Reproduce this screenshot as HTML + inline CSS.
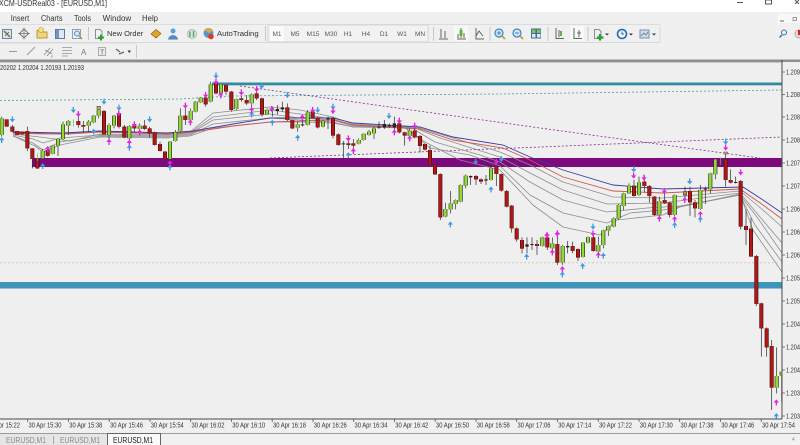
<!DOCTYPE html>
<html><head><meta charset="utf-8"><title>MT4 chart</title>
<style>
html,body{margin:0;padding:0;background:#f0f0f0;width:800px;height:445px;overflow:hidden}
svg{display:block;font-family:"Liberation Sans",sans-serif;filter:blur(.35px)}
.m{font-size:8px;fill:#333}
.tf{font-size:6.5px;fill:#555;text-anchor:middle}
.ax{font-size:7px;fill:#333}
.w{stroke:#333;stroke-width:2.2;fill:none}
</style></head><body>
<svg width="800" height="445" viewBox="0 0 800 445" xmlns="http://www.w3.org/2000/svg">
<defs>
<path id="d" d="M-2-9H2V-1H8L0 9-8-1H-2Z"/>
<path id="u" d="M-2 9H2V1H8L0-9-8 1H-2Z"/>
<path id="r4" d="M20 133V155M37 155V170M52 168V180M67 170V178M82 168V220M97 220V252M112 252V280M143 225V243M235 138V150M250 150V155M312 108V178M357 115V155M373 155V187M403 152V160M434 152V162M449 160V175M464 172V210M480 207V228M495 230V252M556 122V135M617 68V88M648 25V55M678 30V50M694 50V105M724 70V75M740 75V85M770 55V70M786 70V118"/>
<path id="g4" d="M5 130V180M128 228V250M158 212V237M174 192V212M189 148V192M205 138V152M266 140V152M281 122V142M296 105V122M327 150V180M342 122V152M388 153V190M419 152V162M510 200V252M526 172V198M541 122V168M572 108V135M587 80V110M602 68V82M632 28V80M663 28V55M709 72V102M755 58V85M801 105V118"/>
<path id="r5" d="M52 97V135M67 135V160M128 110V128M143 128V157M189 130V182M205 178V210M235 205V210M250 205V212M388 145V172M404 172V182M434 167V187M450 183V213M465 207V224M480 225V268M495 268V298"/>
<path id="g5" d="M83 148V158M113 112V150M159 138V155M266 195V206M281 176V195M297 170V180M312 160V175M419 167V183"/>
<path id="r7" d="M121 42V172M304 42V92M320 93V140M335 137V205M350 205V238M366 240V266M411 252V258M442 232V262M472 252V308M518 258V273M534 267V293M580 232V273M228 48V58M243 58V65M289 20V42"/>
<path id="g7" d="M136 147V170M152 130V148M167 120V132M182 75V125M197 47V77M273 25V60M427 232V258M457 250V265M488 258V307M549 248V291M564 231V248M595 255V275M610 211V255M625 198V212M641 175V200"/>
<path id="r6" d="M312 167V198M343 155V168M358 168V198M373 200V255M404 210V220M419 218V255M480 183V217M495 217V235M587 88V150M602 150V158M632 153V290M648 288V300M663 296V345"/>
<path id="g6" d="M266 225V265M281 190V228M297 167V190M327 157V195M388 213V255M434 195V255M511 180V237M541 130V178M556 88V133"/>
<path id="r8" d="M273 0V80M289 78V222M304 220V295M320 295V352M335 348V473"/>
<path id="g8" d="M350 438V473M365 425V437"/>
</defs>

<!-- window chrome -->
<rect width="800" height="445" fill="#f0f0f0"/>
<rect width="800" height="12" fill="#fff"/>
<text x="-1" y="6" font-size="8" fill="#333" textLength="108" lengthAdjust="spacingAndGlyphs">XCM-USDReal03 - [EURUSD,M1]</text>
<path d="M737 2.500H743" stroke="#555" fill="none"/>
<rect x="765.500" y="0" width="6" height="4" fill="none" stroke="#555"/>
<path d="M795 0L799 4M799 0L795 4" stroke="#555" fill="none"/>

<!-- menu -->
<text class="m" x="10.700" y="21" textLength="18.500" lengthAdjust="spacingAndGlyphs">Insert</text>
<text class="m" x="41" y="21" textLength="21.500" lengthAdjust="spacingAndGlyphs">Charts</text>
<text class="m" x="74" y="21" textLength="17" lengthAdjust="spacingAndGlyphs">Tools</text>
<text class="m" x="102.700" y="21" textLength="28.500" lengthAdjust="spacingAndGlyphs">Window</text>
<text class="m" x="142" y="21" textLength="16" lengthAdjust="spacingAndGlyphs">Help</text>
<rect x="778" y="14" width="22" height="9" fill="#f8f8f8"/>
<path d="M780 21H784" stroke="#666"/>
<rect x="793" y="17.500" width="3.500" height="3" fill="none" stroke="#777" stroke-width=".7"/>

<!-- toolbars -->
<path d="M0 24.500H660M0 43H136" stroke="#dcdcdc" fill="none"/>
<path d="M660 25V42.500H0" stroke="#d8d8d8" fill="none"/>
<path d="M88.500 27V40M265.500 26V41M433.500 27V41M490 27V41M548 27V41M588 27V41M136.500 45V58" stroke="#c8c8c8" fill="none"/>
<rect x="268" y="25" width="160" height="17" fill="#f2f2f2" stroke="#d4d4d4"/>
<rect x="270" y="26" width="14" height="15" fill="#fbfbfb"/>
<text class="tf" x="277" y="36">M1</text><text class="tf" x="295" y="36">M5</text><text class="tf" x="313" y="36">M15</text><text class="tf" x="331" y="36">M30</text><text class="tf" x="348" y="36">H1</text><text class="tf" x="366" y="36">H4</text><text class="tf" x="384" y="36">D1</text><text class="tf" x="402" y="36">W1</text><text class="tf" x="420" y="36">MN</text>

<!-- row 1 icons -->
<rect x="2.500" y="29.500" width="9" height="9" fill="#d8ecd8" stroke="#5a8aa8"/><path d="M4 31L7 34L10 37" stroke="#c83a80" stroke-width="1.500" fill="none"/><path d="M5 36L9 32" stroke="#3a9a3a" fill="none"/>
<path d="M24 29L28.500 33.500 24 38 19.500 33.500Z" fill="#eee" stroke="#777"/><path d="M24 27.500V39.500M18 33.500H30" stroke="#777" stroke-width=".7"/>
<path d="M37 30.500H42L43 32H47V38H37Z" fill="#f0d67a" stroke="#b8983a"/><circle cx="41" cy="30" r="2.500" fill="#f7e27a" stroke="#b8983a" stroke-width=".6"/>
<rect x="55.500" y="29.500" width="9" height="9" fill="#dfe8f4" stroke="#5b7ea8"/><rect x="56" y="30" width="3" height="8" fill="#6d97c8"/>
<rect x="72.500" y="29.500" width="8" height="9" fill="#eef2f6" stroke="#8aa0b8"/><circle cx="77" cy="33.500" r="2.500" fill="#d8e8f4" stroke="#5b8ab0"/><path d="M79 36L82 39" stroke="#b08a3a" stroke-width="1.300"/>
<path d="M95.500 29.500H100L102 31.500V38.500H95.500Z" fill="#f2f2f2" stroke="#7f8fa0"/><path d="M101 34.500V40.500M98 37.500H104" stroke="#2aa02a" stroke-width="2"/>
<text x="107" y="36" font-size="7.500" fill="#333">New Order</text>
<path d="M151 34L156 29.500 161 33.500 156 38Z" fill="#e0a528" stroke="#8a6414" stroke-width=".7"/>
<circle cx="173" cy="31" r="2.500" fill="#5aa0dc"/><path d="M168.500 38.500C169 34 177 34 177.500 38.500Z" fill="#4a8ed0"/><path d="M168 39H178" stroke="#5a7a9a"/>
<circle cx="192" cy="34" r="4.500" fill="#dfe6e2" stroke="#a8b8b0"/><path d="M190 31.500V37M193.500 31V37" stroke="#4aa05a" stroke-width="1.300"/>
<circle cx="208.500" cy="33" r="5" fill="#5c96c4"/><path d="M204 30L209 28 213 31 209 33Z" fill="#e0a840"/><circle cx="211" cy="36.500" r="2.800" fill="#d63a2a"/>
<text x="217" y="36" font-size="7.700" fill="#333">AutoTrading</text>

<path d="M441 29V38M445 31V38M439 39H448" stroke="#5a6a60" fill="none"/>
<rect x="454" y="26" width="14" height="15" fill="#f8f8f8"/>
<path d="M461 28V38M457 39H466M458 34V38M464 33V38" stroke="#5a6a50" fill="none"/><rect x="459.500" y="30" width="3" height="6" fill="#60b830"/>
<path d="M476 28V39H484M476 36L479 31 483 36" stroke="#5a6a60" fill="none"/>
<circle cx="499" cy="33" r="4" fill="#cfe6f6" stroke="#3d86c0" stroke-width="1.200"/><path d="M497 33H501M499 31V35" stroke="#3d86c0"/><path d="M502 36L505 39" stroke="#c8a030" stroke-width="1.800"/>
<circle cx="517" cy="33" r="4" fill="#cfe6f6" stroke="#3d86c0" stroke-width="1.200"/><path d="M515 33H519" stroke="#3d86c0"/><path d="M520 36L523 39" stroke="#c8a030" stroke-width="1.800"/>
<rect x="531" y="28.500" width="10" height="10" fill="#3a6ea8"/><rect x="532" y="29.500" width="3.500" height="3.500" fill="#80c850"/><rect x="537" y="29.500" width="3.500" height="3.500" fill="#80c850"/><rect x="532" y="34" width="3.500" height="3.500" fill="#e8e8e8"/><rect x="537" y="34" width="3.500" height="3.500" fill="#e8e8e8"/>
<path d="M556 28V38.500H564M559 30V37" stroke="#5a6a50" fill="none"/><path d="M561 31V36" stroke="#70a850" stroke-width="2"/>
<rect x="570" y="26" width="14" height="15" fill="#f8f8f8"/>
<path d="M574 28V38.500H582M579 30V37M577 33H581" stroke="#5a6a60" fill="none"/>
<path d="M594.500 29.500H599L601 31.500V38.500H594.500Z" fill="#eee" stroke="#7f8fa0"/><path d="M600 34V40.500M597 37.500H603.500" stroke="#2aa02a" stroke-width="2.200"/>
<path d="M605 33.500H609L607 35.500Z" fill="#333"/>
<circle cx="622" cy="34" r="4.500" fill="#eef4fa" stroke="#1f6aac" stroke-width="1.600"/><path d="M622 31.500V34H624" stroke="#1f6aac" fill="none"/>
<path d="M629 33.500H633L631 35.500Z" fill="#333"/>
<rect x="640" y="30" width="9" height="8" fill="#d0dce8" stroke="#7a90a8"/><path d="M641 36L644 33 646 35 648 32" stroke="#6a8aa8" fill="none"/>
<path d="M652 33.500H656L654 35.500Z" fill="#333"/>
<circle cx="784" cy="32.500" r="2.500" fill="#e4eef6" stroke="#3d76a8"/><path d="M782 35L779.500 37.500" stroke="#3d76a8" stroke-width="1.400"/>
<circle cx="799" cy="34" r="4" fill="#e8d8d8" stroke="#b8a8a8"/><path d="M799 30V35" stroke="#d02020" stroke-width="2"/>

<!-- row 2 icons -->
<path d="M9 51.500H17" stroke="#999"/>
<path d="M27 55L35 47" stroke="#999"/>
<path d="M44 55L50 48M47 56L53 49M45 50L52 54" stroke="#888" stroke-width=".8" fill="none"/><text x="51" y="58" font-size="4" fill="#777">F</text>
<path d="M62 47.500H72M62 50.500H72M62 53.500H72M62 56H68" stroke="#aaa" fill="none"/>
<text x="81" y="55" font-size="8" fill="#777">A</text>
<rect x="98.500" y="47.500" width="7" height="8" fill="#eee" stroke="#aaa"/><text x="100" y="54.500" font-size="7" fill="#666">T</text>
<path d="M116 49L120 52M119 54L124 52" stroke="#666" stroke-width="1.300" fill="none"/><path d="M127.500 50.500H131L129.250 53Z" fill="#333"/>

<!-- chart separator -->
<rect x="0" y="59.500" width="800" height="2.500" fill="#8f8f8f"/>
<rect x="0" y="62" width="800" height="1" fill="#c8c8c8"/>
<rect x="0" y="63" width="782" height="356" fill="#efefef"/>

<!-- price line text -->
<text x="0" y="70" font-size="7" fill="#333" textLength="84" lengthAdjust="spacingAndGlyphs">20202 1.20204 1.20193 1.20193</text>

<!-- levels -->
<rect x="212" y="82.500" width="570" height="2.800" fill="#2f8c9c"/>
<rect x="32" y="158" width="750" height="9" fill="#7d0a7d"/>
<rect x="0" y="282" width="782" height="6.500" fill="#3f94ba"/>
<path d="M0 262.800H782" stroke="#d8c8a4" stroke-width=".8" stroke-dasharray="2 2" fill="none"/>
<path d="M0 100.500L180 99 230 96 500 94 782 90" stroke="#4f9aa8" stroke-width=".8" stroke-dasharray="2 2" fill="none"/>
<path d="M240 86L540 128 760 158" stroke="#8a2a8a" stroke-width=".8" stroke-dasharray="2 2" fill="none"/>
<path d="M270 158L540 147 782 137" stroke="#8a2a8a" stroke-width=".8" stroke-dasharray="2 2" fill="none"/>

<!-- moving averages -->
<g fill="none" stroke="#8e8e8e" stroke-width=".8" stroke-linejoin="round">
<polyline points="13,133 40,134 70,134 100,132 167,134 190,132 213,113 270,107 300,110 333,117 353,124 420,128 443,135 500,152 530,165 563,182 613,197 663,198 740,191 763,210 782,227"/>
<polyline points="13,134 40,137 70,141 100,134 167,135 190,133 213,117 270,110 300,114 333,119 353,125 415,128 440,138 500,157 530,173 563,190 607,204 663,203 740,193 760,217 782,243"/>
<polyline points="13,135 33,139 43,143 60,138 100,135 167,136 190,134 213,120 270,114 300,118 333,120 353,126 410,127 435,142 480,155 500,162 530,182 563,200 607,212 647,208 680,206 740,195 757,217 782,253"/>
<polyline points="13,136 33,143 43,150 60,142 100,136 167,137 190,135 213,124 270,118 300,120 333,122 353,127 405,127 430,148 470,155 500,166 530,195 563,213 607,223 630,213 663,210 740,195 755,225 782,262"/>
<polyline points="13,136 35,146 43,152 60,145 100,137 167,138 190,136 213,128 270,122 300,122 333,123 353,127 405,128 425,142 460,160 500,170 533,205 563,227 600,235 617,220 663,215 680,207 740,194 753,230 782,272"/>
</g>
<polyline fill="none" stroke="#d0554c" stroke-width=".9" points="13,133 63,134 100,132 167,134 193,132 233,126 270,122 333,120 353,125 420,129 453,140 503,148 530,160 563,177 613,191 663,193 740,189 763,205 782,219"/>
<polyline fill="none" stroke="#3c3ca6" stroke-width=".9" points="13,132 63,133 100,131 167,133 193,131 233,124 270,118 333,118 353,123 420,127 453,137 503,145 530,157 563,170 613,185 663,189 743,187 763,200 782,213"/>

<!-- candles group 1 -->
<g transform="translate(0 75) scale(.33333)">
<path class="w" d="M5 125V185M37 150V172M82 155V228M97 220V280M112 252V282M128 222V252M143 215V245M158 210V238M174 190V243M189 140V195M205 135V180M235 125V158M250 138V172M266 135V170M281 120V145M296 95V130M312 105V180M327 145V210M342 120V160M357 110V160M373 150V190M388 150V195M403 140V170M419 145V170M434 135V165M449 155V188M464 170V212M480 200V230M495 228V265M510 198V255M526 165V200M541 100V170M556 100V150M572 100V150M587 78V112M602 66V84M617 60V95M632 20V82M648 22V58M663 28V70M678 28V60M694 48V110M709 70V105M724 62V80M740 60V90M755 55V100M770 50V75M786 68V125M801 100V120"/>
<use href="#r4" fill="none" stroke="#3a0c0c" stroke-width="12"/><use href="#r4" fill="none" stroke="#b01818" stroke-width="8.500"/>
<use href="#g4" fill="none" stroke="#26330f" stroke-width="12"/><use href="#g4" fill="none" stroke="#93d83a" stroke-width="8"/>
<path d="M220 133V155M112 236V258" stroke="#56c46a" stroke-width="2" fill="none"/>
<rect x="291" y="94" width="10" height="9" fill="#d0a070" stroke="#555" stroke-width="2"/>
<g fill="#3f9be8"><use href="#d" x="37" y="133"/><use href="#d" x="220" y="105"/><use href="#d" x="312" y="80"/><use href="#d" x="357" y="98"/><use href="#d" x="449" y="133"/><use href="#d" x="648" y="2"/><use href="#d" x="785" y="33"/><use href="#u" x="5" y="195"/><use href="#u" x="128" y="273"/><use href="#u" x="388" y="218"/><use href="#u" x="510" y="277"/><use href="#u" x="281" y="170"/><use href="#u" x="755" y="118"/></g>
<g fill="#e424e4"><use href="#d" x="235" y="117"/><use href="#d" x="356" y="115"/><use href="#d" x="403" y="148"/><use href="#d" x="556" y="92"/><use href="#d" x="617" y="60"/><use href="#d" x="648" y="20"/><use href="#d" x="724" y="52"/><use href="#d" x="770" y="42"/><use href="#u" x="143" y="222"/><use href="#u" x="327" y="200"/><use href="#u" x="388" y="203"/><use href="#u" x="419" y="172"/><use href="#u" x="571" y="142"/><use href="#u" x="662" y="60"/><use href="#u" x="755" y="105"/><use href="#u" x="510" y="265"/></g>
</g>

<!-- candles group 2 -->
<g transform="translate(270 75) scale(.33333)">
<path class="w" d="M7 95V125M22 90V118M37 80V110M52 85V138M67 135V162M83 140V170M98 130V155M113 105V152M128 105V130M143 125V160M159 135V157M174 125V162M189 125V190M205 175V212M220 198V252M235 190V222M250 192V235M266 190V208M281 175V197M297 165V182M312 155V192M327 140V162M343 135V162M358 145V157M373 125V178M388 130V175M404 170V212M419 160V195M434 160V190M450 180V232M465 205V226M480 212V272M495 265V300"/>
<path d="M7 100V104M22 102V108M37 97V103M98 148V151M174 130V133M220 205V208M327 155V158M343 147V157M358 150V154M373 145V157" stroke="#222" stroke-width="10" fill="none"/>
<use href="#r5" fill="none" stroke="#3a0c0c" stroke-width="12"/><use href="#r5" fill="none" stroke="#b01818" stroke-width="8.500"/>
<use href="#g5" fill="none" stroke="#26330f" stroke-width="12"/><use href="#g5" fill="none" stroke="#93d83a" stroke-width="8"/>
<g fill="#3f9be8"><use href="#d" x="52" y="60"/><use href="#d" x="357" y="123"/><use href="#d" x="143" y="105"/><use href="#d" x="189" y="95"/><use href="#d" x="617" y="260"/><use href="#d" x="694" y="252"/><use href="#u" x="7" y="143"/><use href="#u" x="83" y="188"/><use href="#u" x="235" y="240"/></g>
<g fill="#e424e4"><use href="#d" x="5" y="102"/><use href="#d" x="128" y="105"/><use href="#d" x="189" y="108"/><use href="#d" x="235" y="190"/><use href="#d" x="388" y="137"/><use href="#d" x="434" y="152"/><use href="#d" x="679" y="260"/><use href="#u" x="97" y="127"/><use href="#u" x="250" y="228"/><use href="#u" x="373" y="172"/><use href="#u" x="419" y="190"/></g>
</g>

<!-- candles group 3 -->
<g transform="translate(400 160) scale(.33333)">
<path class="w" d="M121 40V180M136 128V172M152 93V160M167 118V148M182 73V127M197 43V85M212 46V75M228 45V75M243 55V72M258 45V75M273 15V62M289 15V78M304 40V95M320 90V142M335 135V218M350 202V245M366 232V280M381 232V280M396 232V270M411 240V285M427 230V260M442 225V270M457 232V285M472 230V315M488 255V315M503 243V280M518 245V280M534 265V303M549 246V293M564 229V250M580 225V275M595 230V285M610 209V265M625 196V228M641 172V202"/>
<path d="M212 48V52M258 58V62M381 253V260M396 252V255M503 258V262" stroke="#222" stroke-width="10" fill="none"/>
<use href="#r7" fill="none" stroke="#3a0c0c" stroke-width="12"/><use href="#r7" fill="none" stroke="#b01818" stroke-width="8.500"/>
<use href="#g7" fill="none" stroke="#26330f" stroke-width="12"/><use href="#g7" fill="none" stroke="#93d83a" stroke-width="8"/>
<g fill="#3f9be8"><use href="#u" x="151" y="193"/><use href="#u" x="273" y="88"/><use href="#u" x="380" y="290"/><use href="#u" x="548" y="318"/><use href="#u" x="610" y="287"/><use href="#u" x="487" y="343"/><use href="#d" x="579" y="200"/></g>
<g fill="#e424e4"><use href="#d" x="441" y="225"/><use href="#d" x="472" y="220"/><use href="#d" x="579" y="220"/><use href="#u" x="457" y="277"/><use href="#u" x="487" y="327"/><use href="#u" x="595" y="285"/></g>
</g>

<!-- candles group 4 -->
<g transform="translate(530 130) scale(.33333)">
<path class="w" d="M266 222V270M281 188V240M297 160V192M312 150V200M327 140V198M343 135V188M358 165V218M373 198V258M388 200V262M404 185V222M419 215V262M434 193V258M465 170V210M480 170V258M495 210V262M511 165V240M526 170V222M541 128V190M556 85V148M587 70V170M602 118V160M617 140V160M632 150V298M648 238V345M663 264V345"/>
<path d="M526 176V179M617 156V159" stroke="#222" stroke-width="10" fill="none"/>
<rect x="460" y="185" width="10" height="10" fill="#c89030" stroke="#444" stroke-width="2"/>
<use href="#r6" fill="none" stroke="#3a0c0c" stroke-width="12"/><use href="#r6" fill="none" stroke="#b01818" stroke-width="8.500"/>
<use href="#g6" fill="none" stroke="#26330f" stroke-width="12"/><use href="#g6" fill="none" stroke="#93d83a" stroke-width="8"/>
<path d="M571 82V105" stroke="#56c46a" stroke-width="2" fill="none"/>
<rect x="581" y="66" width="12" height="6" fill="#c8a090" stroke="#555" stroke-width="1.500"/>
<g fill="#3f9be8"><use href="#d" x="311" y="118"/><use href="#d" x="479" y="154"/><use href="#d" x="587" y="35"/><use href="#u" x="434" y="285"/><use href="#u" x="511" y="268"/></g>
<g fill="#e424e4"><use href="#d" x="311" y="137"/><use href="#d" x="342" y="143"/><use href="#d" x="403" y="183"/><use href="#d" x="632" y="127"/><use href="#d" x="587" y="53"/><use href="#u" x="51" y="316"/><use href="#u" x="82" y="312"/><use href="#u" x="388" y="266"/><use href="#u" x="434" y="267"/><use href="#u" x="464" y="210"/><use href="#u" x="511" y="252"/></g>
</g>

<!-- candles group 5 -->
<g transform="translate(660 230) scale(.33333)">
<path class="w" d="M289 75V228M304 218V380M320 292V380M335 330V540M350 352V490M365 437V515"/>
<use href="#r8" fill="none" stroke="#3a0c0c" stroke-width="12"/><use href="#r8" fill="none" stroke="#b01818" stroke-width="8.500"/>
<use href="#g8" fill="none" stroke="#26330f" stroke-width="12"/><use href="#g8" fill="none" stroke="#93d83a" stroke-width="8"/>
<use href="#u" x="349" y="517" fill="#e424e4"/><use href="#u" x="349" y="558" fill="#3f9be8"/>
</g>

<!-- right scale -->
<rect x="782.500" y="62" width="18" height="357" fill="#f0f0f0"/>
<rect x="781.500" y="60" width="1" height="359" fill="#4a4a4a"/>
<path d="M782 72H785M782 94.500H785M782 117H785M782 140H785M782 163H785M782 186H785M782 209H785M782 232H785M782 255H785M782 278H785M782 301H785M782 324H785M782 347H785M782 370H785M782 393H785M782 416H785" stroke="#555" stroke-width=".8"/>
<text class="ax" x="786" y="74.500" textLength="14" lengthAdjust="spacingAndGlyphs">1.209</text>
<text class="ax" x="786" y="97" textLength="14" lengthAdjust="spacingAndGlyphs">1.208</text>
<text class="ax" x="786" y="119.500" textLength="14" lengthAdjust="spacingAndGlyphs">1.208</text>
<text class="ax" x="786" y="142.500" textLength="14" lengthAdjust="spacingAndGlyphs">1.208</text>
<text class="ax" x="786" y="165.500" textLength="14" lengthAdjust="spacingAndGlyphs">1.207</text>
<text class="ax" x="786" y="188.500" textLength="14" lengthAdjust="spacingAndGlyphs">1.207</text>
<text class="ax" x="786" y="211.500" textLength="14" lengthAdjust="spacingAndGlyphs">1.206</text>
<text class="ax" x="786" y="234.500" textLength="14" lengthAdjust="spacingAndGlyphs">1.206</text>
<text class="ax" x="786" y="257.500" textLength="14" lengthAdjust="spacingAndGlyphs">1.206</text>
<text class="ax" x="786" y="280.500" textLength="14" lengthAdjust="spacingAndGlyphs">1.205</text>
<text class="ax" x="786" y="303.500" textLength="14" lengthAdjust="spacingAndGlyphs">1.205</text>
<text class="ax" x="786" y="326.500" textLength="14" lengthAdjust="spacingAndGlyphs">1.204</text>
<text class="ax" x="786" y="349.500" textLength="14" lengthAdjust="spacingAndGlyphs">1.204</text>
<text class="ax" x="786" y="372.500" textLength="14" lengthAdjust="spacingAndGlyphs">1.204</text>
<text class="ax" x="786" y="395.500" textLength="14" lengthAdjust="spacingAndGlyphs">1.203</text>
<text class="ax" x="786" y="418.500" textLength="14" lengthAdjust="spacingAndGlyphs">1.203</text>

<!-- time axis -->
<rect x="0" y="418.500" width="782" height="1" fill="#4a4a4a"/>
<path d="M27.700 419V422M68.500 419V422M109.200 419V422M150 419V422M190.700 419V422M231.500 419V422M272.200 419V422M313 419V422M353.700 419V422M394.500 419V422M435.200 419V422M476 419V422M516.700 419V422M557.500 419V422M598.200 419V422M639 419V422M679.700 419V422M720.500 419V422M761.200 419V422" stroke="#555" stroke-width=".8"/>
<g font-size="7" fill="#333">
<text x="-13" y="427.500" textLength="33" lengthAdjust="spacingAndGlyphs">30 Apr 15:22</text>
<text x="28.500" y="427.500" textLength="33" lengthAdjust="spacingAndGlyphs">30 Apr 15:30</text>
<text x="69.300" y="427.500" textLength="33" lengthAdjust="spacingAndGlyphs">30 Apr 15:38</text>
<text x="110" y="427.500" textLength="33" lengthAdjust="spacingAndGlyphs">30 Apr 15:46</text>
<text x="150.800" y="427.500" textLength="33" lengthAdjust="spacingAndGlyphs">30 Apr 15:54</text>
<text x="191.500" y="427.500" textLength="33" lengthAdjust="spacingAndGlyphs">30 Apr 16:02</text>
<text x="232.300" y="427.500" textLength="33" lengthAdjust="spacingAndGlyphs">30 Apr 16:10</text>
<text x="273" y="427.500" textLength="33" lengthAdjust="spacingAndGlyphs">30 Apr 16:18</text>
<text x="313.800" y="427.500" textLength="33" lengthAdjust="spacingAndGlyphs">30 Apr 16:26</text>
<text x="354.500" y="427.500" textLength="33" lengthAdjust="spacingAndGlyphs">30 Apr 16:34</text>
<text x="395.300" y="427.500" textLength="33" lengthAdjust="spacingAndGlyphs">30 Apr 16:42</text>
<text x="436" y="427.500" textLength="33" lengthAdjust="spacingAndGlyphs">30 Apr 16:50</text>
<text x="476.800" y="427.500" textLength="33" lengthAdjust="spacingAndGlyphs">30 Apr 16:58</text>
<text x="517.500" y="427.500" textLength="33" lengthAdjust="spacingAndGlyphs">30 Apr 17:06</text>
<text x="558.300" y="427.500" textLength="33" lengthAdjust="spacingAndGlyphs">30 Apr 17:14</text>
<text x="599" y="427.500" textLength="33" lengthAdjust="spacingAndGlyphs">30 Apr 17:22</text>
<text x="639.800" y="427.500" textLength="33" lengthAdjust="spacingAndGlyphs">30 Apr 17:30</text>
<text x="680.500" y="427.500" textLength="33" lengthAdjust="spacingAndGlyphs">30 Apr 17:38</text>
<text x="721.300" y="427.500" textLength="33" lengthAdjust="spacingAndGlyphs">30 Apr 17:46</text>
<text x="762" y="427.500" textLength="33" lengthAdjust="spacingAndGlyphs">30 Apr 17:54</text>
</g>

<!-- tabs -->
<rect x="0" y="433" width="800" height="1.200" fill="#9a9a9a"/>
<rect x="0" y="434" width="800" height="11" fill="#f1f1f1"/>
<rect x="0" y="434" width="107" height="11" fill="#e6e6e6"/>
<rect x="107.500" y="433.500" width="53" height="13" fill="#fafafa" stroke="#666"/>
<path d="M53.500 436V444" stroke="#aaa"/>
<text x="6" y="443" font-size="8" fill="#8a8a8a" textLength="40" lengthAdjust="spacingAndGlyphs">EURUSD,M1</text>
<text x="60" y="443" font-size="8" fill="#8a8a8a" textLength="40" lengthAdjust="spacingAndGlyphs">EURUSD,M1</text>
<text x="113" y="443" font-size="8" fill="#222" textLength="40" lengthAdjust="spacingAndGlyphs">EURUSD,M1</text>
<text x="792" y="441" font-size="5" fill="#888">4</text>
</svg>
</body></html>
